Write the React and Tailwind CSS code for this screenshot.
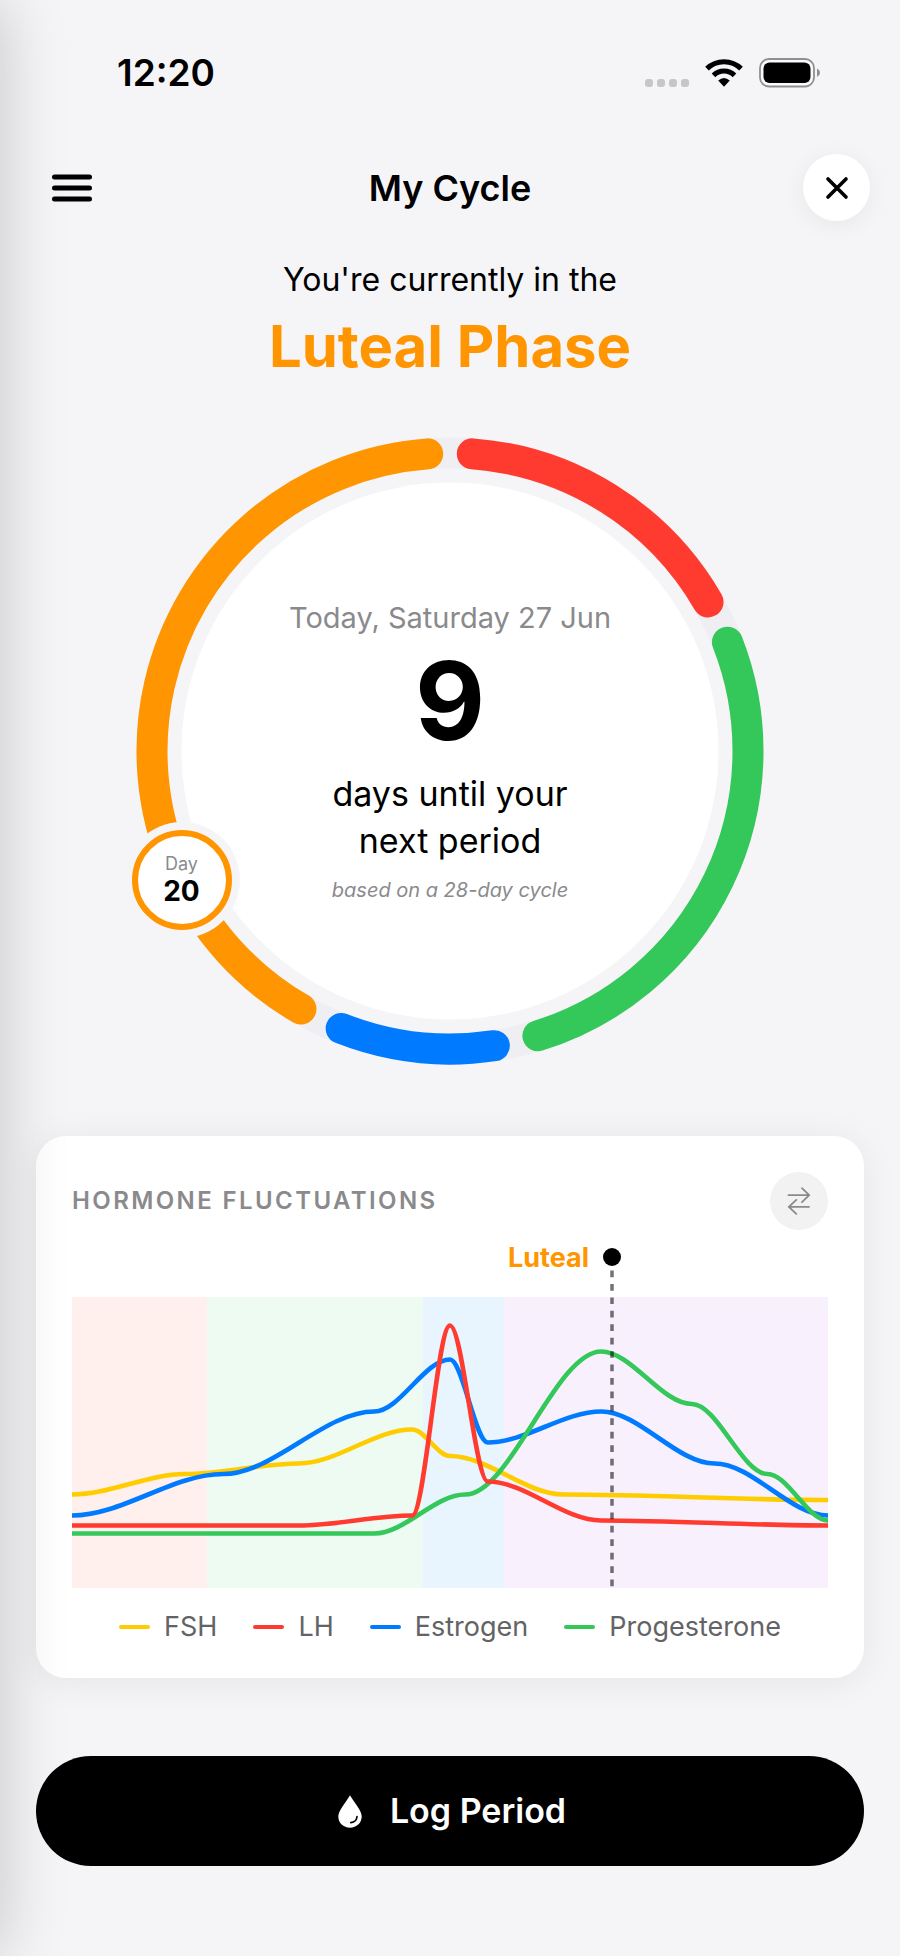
const COLORS = {
  red: '#ff3b30',
  green: '#34c759',
  blue: '#007aff',
  orange: '#ff9500',
  yellow: '#ffcc00',
};

const CYCLE_LENGTH = 28;
const CURRENT_DAY = 20;

const phases = [
  { name: 'Menstrual', start: 0, end: 5, color: COLORS.red, band: '#ffefed' },
  { name: 'Follicular', start: 5, end: 13, color: COLORS.green, band: '#edfbf2' },
  { name: 'Ovulation', start: 13, end: 16, color: COLORS.blue, band: '#e8f4fe' },
  { name: 'Luteal', start: 16, end: 28, color: COLORS.orange, band: '#f8f0fd' },
];

// Points are [percent of the cycle, y in the plot]
const hormones = [
  {
    name: 'FSH',
    color: COLORS.yellow,
    points: [[0, 197.5], [15, 177], [30, 166.5], [45, 132.5], [50, 159], [65, 197.5], [100, 203]],
  },
  {
    name: 'LH',
    color: COLORS.red,
    points: [[0, 228.5], [30, 228.5], [45, 218.5], [50, 28.5], [55, 184.5], [70, 223.5], [100, 228.5]],
  },
  {
    name: 'Estrogen',
    color: COLORS.blue,
    points: [[0, 218.5], [20, 177], [40, 114.5], [50, 62.5], [55, 145.5], [70, 114.5], [85, 166.5], [100, 218.5]],
  },
  {
    name: 'Progesterone',
    color: COLORS.green,
    points: [[0, 236.5], [40, 236.5], [52, 197.5], [70, 54.5], [82, 107], [92, 177], [100, 223.5]],
  },
];

const RING = { size: 628, radius: 298, stroke: 31, capAngle: 4.3 };

function polar(angle, radius = RING.radius) {
  const rad = ((angle - 90) * Math.PI) / 180;
  const c = RING.size / 2;
  return [c + radius * Math.cos(rad), c + radius * Math.sin(rad)];
}

function arcPath(from, to) {
  const [x1, y1] = polar(from);
  const [x2, y2] = polar(to);
  const large = to - from > 180 ? 1 : 0;
  return `M${x1} ${y1} A${RING.radius} ${RING.radius} 0 ${large} 1 ${x2} ${y2}`;
}

function StatusBar() {
  return (
    <div className="flex items-center justify-between pt-[50px] pl-[117px] pr-[79px]">
      <span className="text-[37px] leading-[46px] font-semibold">12:20</span>
      <div className="flex items-center gap-4">
        <div className="flex gap-1 pt-[19px]">
          {[0, 1, 2, 3].map((i) => (
            <span key={i} className="size-2 rounded-[3px] bg-[#c6c6c8]" />
          ))}
        </div>
        <svg width="38" height="28" viewBox="0 0 38 28" aria-hidden="true">
          <g fill="none" stroke="#000" strokeWidth="5.2">
            <path d="M2 9.6 A24.5 24.5 0 0 1 36 9.6" />
            <path d="M8.5 16.3 A15 15 0 0 1 29.5 16.3" />
          </g>
          <path d="M13.2 21.6 Q19 16.6 24.8 21.6 L19 27.8 Z" />
        </svg>
        <svg width="62" height="30" viewBox="0 0 62 30" aria-hidden="true">
          <rect x="1" y="1" width="54" height="27.5" rx="9" fill="#fff" fillOpacity="0.5" stroke="#8f8f91" strokeWidth="1.8" />
          <rect x="4.5" y="4.5" width="47" height="20.5" rx="6" />
          <path d="M58 10.5 Q61 12 61 14.8 Q61 17.6 58 19 Z" fill="#8f8f91" />
        </svg>
      </div>
    </div>
  );
}

function Header() {
  return (
    <header className="mt-[58px] grid grid-cols-[1fr_auto_1fr] items-center px-[30px]">
      <button aria-label="Menu" className="grid h-[67px] w-[84px] place-items-center">
        <svg width="40" height="28" viewBox="0 0 40 28" stroke="#000" strokeWidth="5" strokeLinecap="round">
          <path d="M2.5 3H37.5M2.5 14H37.5M2.5 25H37.5" />
        </svg>
      </button>
      <h2 className="text-[36px] leading-[46px] font-semibold">My Cycle</h2>
      <button
        aria-label="Close"
        className="grid size-[67px] place-items-center justify-self-end rounded-full bg-white shadow-[0_4px_24px_rgba(0,0,0,0.06)]"
      >
        <svg width="24" height="24" viewBox="0 0 24 24" stroke="#000" strokeWidth="3.6" strokeLinecap="round">
          <path d="M3 3L21 21M21 3L3 21" />
        </svg>
      </button>
    </header>
  );
}

function CycleRing() {
  const c = RING.size / 2;
  const dayAngle = ((CURRENT_DAY - 1) / CYCLE_LENGTH) * 360;
  const [mx, my] = polar(dayAngle);

  return (
    <div className="relative mx-auto mt-[55px] grid w-full max-w-[628px]">
      <svg viewBox={`0 0 ${RING.size} ${RING.size}`} className="col-start-1 row-start-1 h-auto w-full" aria-hidden="true">
        <circle cx={c} cy={c} r={RING.radius} fill="none" stroke="#efeff3" strokeWidth={RING.stroke} />
        <circle cx={c} cy={c} r="268.5" fill="#fff" />
        {phases.map((p) => (
          <path
            key={p.name}
            d={arcPath(
              (p.start / CYCLE_LENGTH) * 360 + RING.capAngle,
              (p.end / CYCLE_LENGTH) * 360 - RING.capAngle
            )}
            fill="none"
            stroke={p.color}
            strokeWidth={RING.stroke}
            strokeLinecap="round"
          />
        ))}
      </svg>

      <div className="col-start-1 row-start-1 flex flex-col items-center justify-center pt-1 text-center">
        <p className="text-[29px] leading-8 text-[#8a8a8d]">Today, Saturday 27 Jun</p>
        <p className="mt-3 text-[108px] leading-[110px] font-bold">9</p>
        <p className="mt-[14px] text-[34px] leading-[47px]">
          days until your
          <br />
          next period
        </p>
        <p className="mt-3 text-[20px] leading-7 text-[#8a8a8d] italic">based on a 28-day cycle</p>
      </div>

      {/* Current day marker */}
      <div
        className="absolute flex size-[116px] -translate-x-1/2 -translate-y-1/2 rounded-full bg-[#f5f5f8] p-2"
        style={{ left: `${(mx / RING.size) * 100}%`, top: `${(my / RING.size) * 100}%` }}
      >
        <div className="flex flex-1 flex-col items-center justify-center rounded-full border-[6px] border-[#ff9500] bg-white pb-[2px]">
          <span className="text-[18px] leading-6 text-[#8a8a8d]">Day</span>
          <span className="text-[28px] leading-[30px] font-bold">{CURRENT_DAY}</span>
        </div>
      </div>
    </div>
  );
}

const CHART = { width: 756, height: 355, top: 64 };

function curvePath(points) {
  return points
    .map(([pct, py], i) => {
      const x = (pct / 100) * CHART.width;
      const y = py + CHART.top;
      if (i === 0) return `M${x} ${y}`;
      const px = (points[i - 1][0] / 100) * CHART.width;
      const prevY = points[i - 1][1] + CHART.top;
      const third = (x - px) / 3;
      return `C${px + third} ${prevY} ${x - third} ${y} ${x} ${y}`;
    })
    .join(' ');
}

function HormoneChart() {
  const day = CHART.width / CYCLE_LENGTH;
  const todayX = CURRENT_DAY * day;
  const drawOrder = ['FSH', 'Estrogen', 'Progesterone', 'LH'];

  return (
    <svg viewBox={`0 0 ${CHART.width} ${CHART.height}`} className="mt-[3px] block h-auto w-full">
      {phases.map((p) => (
        <rect
          key={p.name}
          x={p.start * day}
          y={CHART.top}
          width={(p.end - p.start) * day}
          height={CHART.height - CHART.top}
          fill={p.band}
        />
      ))}
      {drawOrder.map((name) => {
        const h = hormones.find((item) => item.name === name);
        return <path key={name} d={curvePath(h.points)} fill="none" stroke={h.color} strokeWidth="4.6" />;
      })}
      <line
        x1={todayX}
        x2={todayX}
        y1="37.5"
        y2={CHART.height}
        stroke="#000"
        strokeOpacity="0.55"
        strokeWidth="3.5"
        strokeDasharray="6.72 6.72"
      />
      <circle cx={todayX} cy="24" r="9" />
      <text x={todayX - 23} y="34" textAnchor="end" fill="#ff9500" className="text-[27px] font-bold">
        Luteal
      </text>
    </svg>
  );
}

function HormoneCard() {
  return (
    <section className="mx-9 mt-[71px] rounded-[30px] bg-white p-9 shadow-[0_4px_36px_rgba(0,0,0,0.07)]">
      <div className="flex items-center justify-between">
        <h3 className="text-[24px] leading-8 font-semibold tracking-widest text-[#8a8a8d] uppercase">
          Hormone Fluctuations
        </h3>
        <button aria-label="Switch view" className="grid size-[58px] place-items-center rounded-full bg-[#f2f2f3]">
          <svg
            width="24"
            height="28"
            viewBox="0 0 24 28"
            fill="none"
            stroke="#8a8a8d"
            strokeWidth="1.8"
            strokeLinecap="round"
            strokeLinejoin="round"
          >
            <path d="M1.5 8.2H22M15 1.2L22.2 8.2L15 15.2" />
            <path d="M22 19.9H2M9.3 12.9L1.8 19.9L9.3 26.9" />
          </svg>
        </button>
      </div>

      <HormoneChart />

      <ul className="mt-6 flex flex-wrap justify-center gap-x-9">
        {hormones.map((h) => (
          <li key={h.name} className="flex items-center gap-[14px]">
            <span className="h-1 w-[31px] rounded-full" style={{ backgroundColor: h.color }} />
            <span className="text-[27px] leading-[30px] text-[#636366]">{h.name}</span>
          </li>
        ))}
      </ul>
    </section>
  );
}

function LogButton() {
  return (
    <div className="mt-[78px] px-9 pb-[90px]">
      <button className="flex h-[110px] w-full items-center justify-center gap-7 rounded-full bg-black pl-1 text-white">
        <svg width="24" height="33" viewBox="0 0 24 33" aria-hidden="true">
          <path
            d="M12 0.3C13.5 3 16.5 7 19.5 11.5C22 15.3 23.7 18.5 23.7 21.5C23.7 28 18.5 32.7 12 32.7C5.5 32.7 0.3 28 0.3 21.5C0.3 18.5 2 15.3 4.5 11.5C7.5 7 10.5 3 12 0.3Z"
            fill="#fff"
          />
          <path d="M19 21.5C18.8 25 16.3 27.3 12.8 27.7" fill="none" stroke="#000" strokeWidth="1.7" strokeLinecap="round" />
        </svg>
        <span className="text-[34px] leading-[44px] font-semibold">Log Period</span>
      </button>
    </div>
  );
}

export default function App() {
  return (
    <main className="relative min-h-screen overflow-hidden bg-[#f5f5f8] font-['Inter',sans-serif] text-black">
      <StatusBar />
      <Header />
      <div className="mt-[37px] text-center">
        <p className="text-[32px] leading-[44px]">You're currently in the</p>
        <h1 className="mt-2 text-[58px] leading-[72px] font-bold text-[#ff9500]">Luteal Phase</h1>
      </div>
      <CycleRing />
      <HormoneCard />
      <LogButton />

      {/* Shadow cast by the drawer that sits off the left edge */}
      <div className="pointer-events-none absolute inset-y-0 right-full w-20 shadow-[0_0_68px_rgba(0,0,0,0.2)]" />
    </main>
  );
}
